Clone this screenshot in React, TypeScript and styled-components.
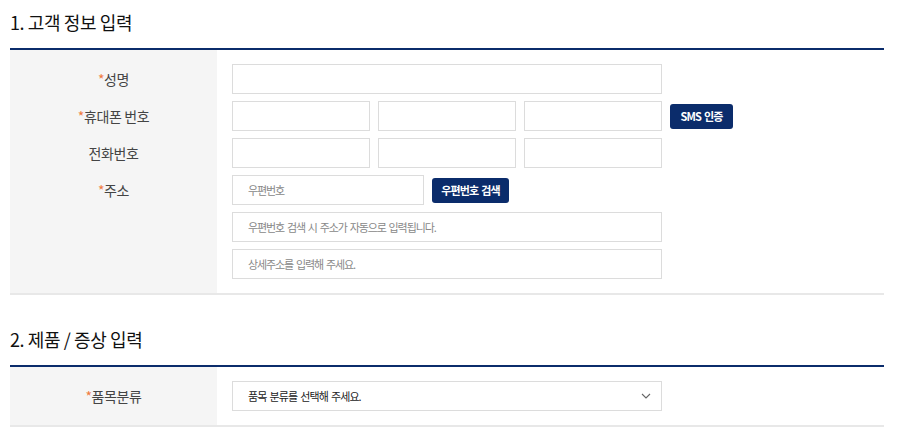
import React from 'react'
import styled, { createGlobalStyle } from 'styled-components'

const GlobalStyle = createGlobalStyle`
  html, body {
    margin: 0;
    padding: 0;
    background: #fff;
    font-family: "Noto Sans CJK KR", "Noto Sans", sans-serif;
    color: #333;
  }
`

const NAVY = '#0b2c6b'
const LABEL_W = 207

const Page = styled.div`
  width: 874px;
  padding-left: 10px;
`

const Section = styled.section`
  & + & {
    margin-top: 22px;
  }
`

const Heading = styled.h2`
  margin: 0;
  height: 48px;
  line-height: 44px;
  font-size: 18px;
  font-weight: 400;
  color: #111;
  letter-spacing: -0.4px;
`

const Table = styled.div`
  display: grid;
  grid-template-columns: ${LABEL_W}px 1fr;
  row-gap: 7px;
  padding: 14px 0;
  border-top: 2px solid ${NAVY};
  border-bottom: 2px solid #e8e8e8;
  background: linear-gradient(to right, #f5f5f5 ${LABEL_W}px, #fff ${LABEL_W}px);
`

const Label = styled.div`
  height: 30px;
  line-height: 30px;
  text-align: center;
  font-size: 14px;
  color: #444;
  letter-spacing: -0.4px;
`

const Req = styled.span`
  color: #f07b3f;
`

const Field = styled.div`
  display: flex;
  align-items: center;
  gap: 8px;
  padding-left: 15px;
`

const Input = styled.input<{ $w?: number }>`
  box-sizing: border-box;
  width: ${({ $w }) => ($w ? `${$w}px` : '430px')};
  height: 30px;
  border: 1px solid #dcdcdc;
  padding: 0 15px;
  font-family: inherit;
  font-size: 11px;
  letter-spacing: -1.1px;
  word-spacing: 1.5px;
  color: #333;
  outline: none;
  &::placeholder {
    color: #888;
  }
`

const Button = styled.button<{ $w: number }>`
  box-sizing: border-box;
  width: ${({ $w }) => $w}px;
  height: 25px;
  border: none;
  border-radius: 3px;
  background: ${NAVY};
  color: #fff;
  font-family: inherit;
  font-size: 11px;
  font-weight: 700;
  letter-spacing: -0.9px;
  word-spacing: 1.5px;
  padding: 0;
  cursor: pointer;
`

const Select = styled.div`
  box-sizing: border-box;
  width: 430px;
  height: 30px;
  border: 1px solid #dcdcdc;
  padding: 0 10px 0 15px;
  display: flex;
  align-items: center;
  justify-content: space-between;
  font-size: 11px;
  letter-spacing: -0.9px;
  word-spacing: 1.5px;
  color: #222;
`

const Chevron = () => (
  <svg width="10" height="6" viewBox="0 0 10 6" fill="none">
    <polyline points="1,1 5,5 9,1" stroke="#666" strokeWidth="1.1" />
  </svg>
)

const App = () => (
  <>
    <GlobalStyle />
    <Page>
      <Section>
        <Heading>1. 고객 정보 입력</Heading>
        <Table>
          <Label><Req>*</Req>성명</Label>
          <Field><Input /></Field>

          <Label><Req>*</Req>휴대폰 번호</Label>
          <Field>
            <Input $w={138} />
            <Input $w={138} />
            <Input $w={138} />
            <Button $w={63}>SMS 인증</Button>
          </Field>

          <Label>전화번호</Label>
          <Field>
            <Input $w={138} />
            <Input $w={138} />
            <Input $w={138} />
          </Field>

          <Label><Req>*</Req>주소</Label>
          <Field>
            <Input $w={192} placeholder="우편번호" />
            <Button $w={77}>우편번호 검색</Button>
          </Field>

          <Label />
          <Field><Input placeholder="우편번호 검색 시 주소가 자동으로 입력됩니다." /></Field>

          <Label />
          <Field><Input placeholder="상세주소를 입력해 주세요." /></Field>
        </Table>
      </Section>

      <Section>
        <Heading>2. 제품 / 증상 입력</Heading>
        <Table>
          <Label><Req>*</Req>품목분류</Label>
          <Field>
            <Select>
              품목 분류를 선택해 주세요.
              <Chevron />
            </Select>
          </Field>
        </Table>
      </Section>
    </Page>
  </>
)

export default App
